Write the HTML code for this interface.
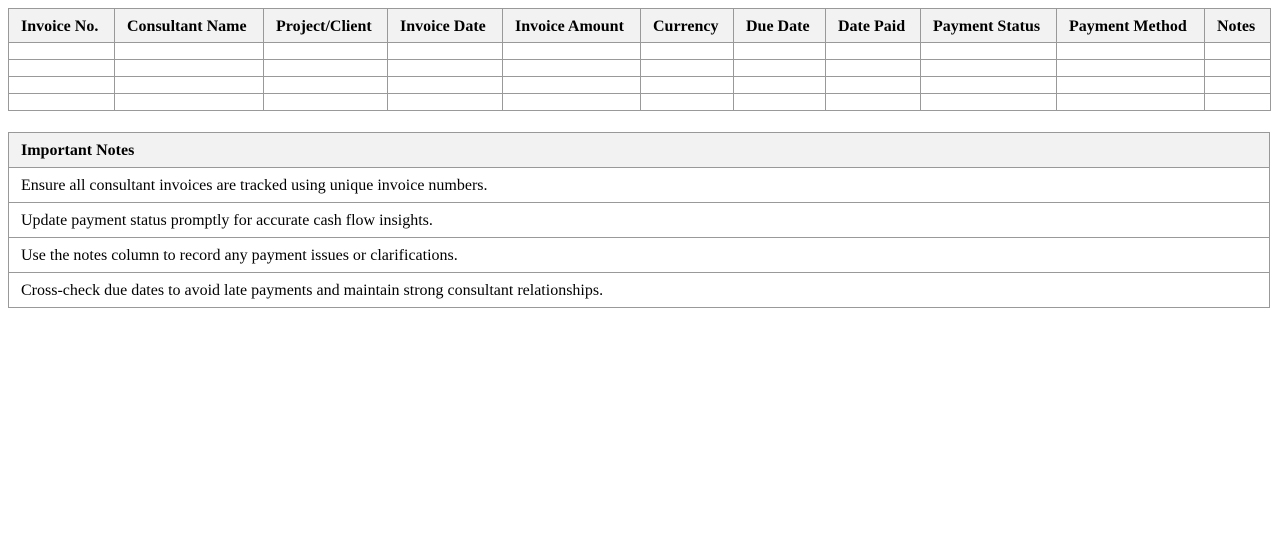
<!DOCTYPE html>
<html><head><style>
body{margin:0;padding:8px;background:#fff;font-family:"Liberation Serif",serif;font-size:16px;color:#000}
table{border-collapse:collapse;table-layout:fixed;width:1262px}
td,th{border:1px solid #999;padding:0 12px;text-align:left;white-space:nowrap;overflow:hidden;line-height:18px}
th{background:#f2f2f2;font-weight:bold}
.t1 th{height:30px;padding-top:3px}
.t1 td{height:16px;padding:0}
.t2{margin-top:21px}
.t2 th,.t2 td{height:32px;padding-top:2px;padding-bottom:0}
</style></head><body>
<table class="t1">
<colgroup><col style="width:106px"><col style="width:149px"><col style="width:124px"><col style="width:115px"><col style="width:138px"><col style="width:93px"><col style="width:92px"><col style="width:95px"><col style="width:136px"><col style="width:148px"><col style="width:66px"></colgroup>
<tr><th>Invoice No.</th><th>Consultant Name</th><th>Project/Client</th><th>Invoice Date</th><th>Invoice Amount</th><th>Currency</th><th>Due Date</th><th>Date Paid</th><th>Payment Status</th><th>Payment Method</th><th>Notes</th></tr>
<tr><td></td><td></td><td></td><td></td><td></td><td></td><td></td><td></td><td></td><td></td><td></td></tr>
<tr><td></td><td></td><td></td><td></td><td></td><td></td><td></td><td></td><td></td><td></td><td></td></tr>
<tr><td></td><td></td><td></td><td></td><td></td><td></td><td></td><td></td><td></td><td></td><td></td></tr>
<tr><td></td><td></td><td></td><td></td><td></td><td></td><td></td><td></td><td></td><td></td><td></td></tr>
</table>
<table class="t2">
<tr><th>Important Notes</th></tr>
<tr><td>Ensure all consultant invoices are tracked using unique invoice numbers.</td></tr>
<tr><td>Update payment status promptly for accurate cash flow insights.</td></tr>
<tr><td>Use the notes column to record any payment issues or clarifications.</td></tr>
<tr><td>Cross-check due dates to avoid late payments and maintain strong consultant relationships.</td></tr>
</table>
</body></html>
